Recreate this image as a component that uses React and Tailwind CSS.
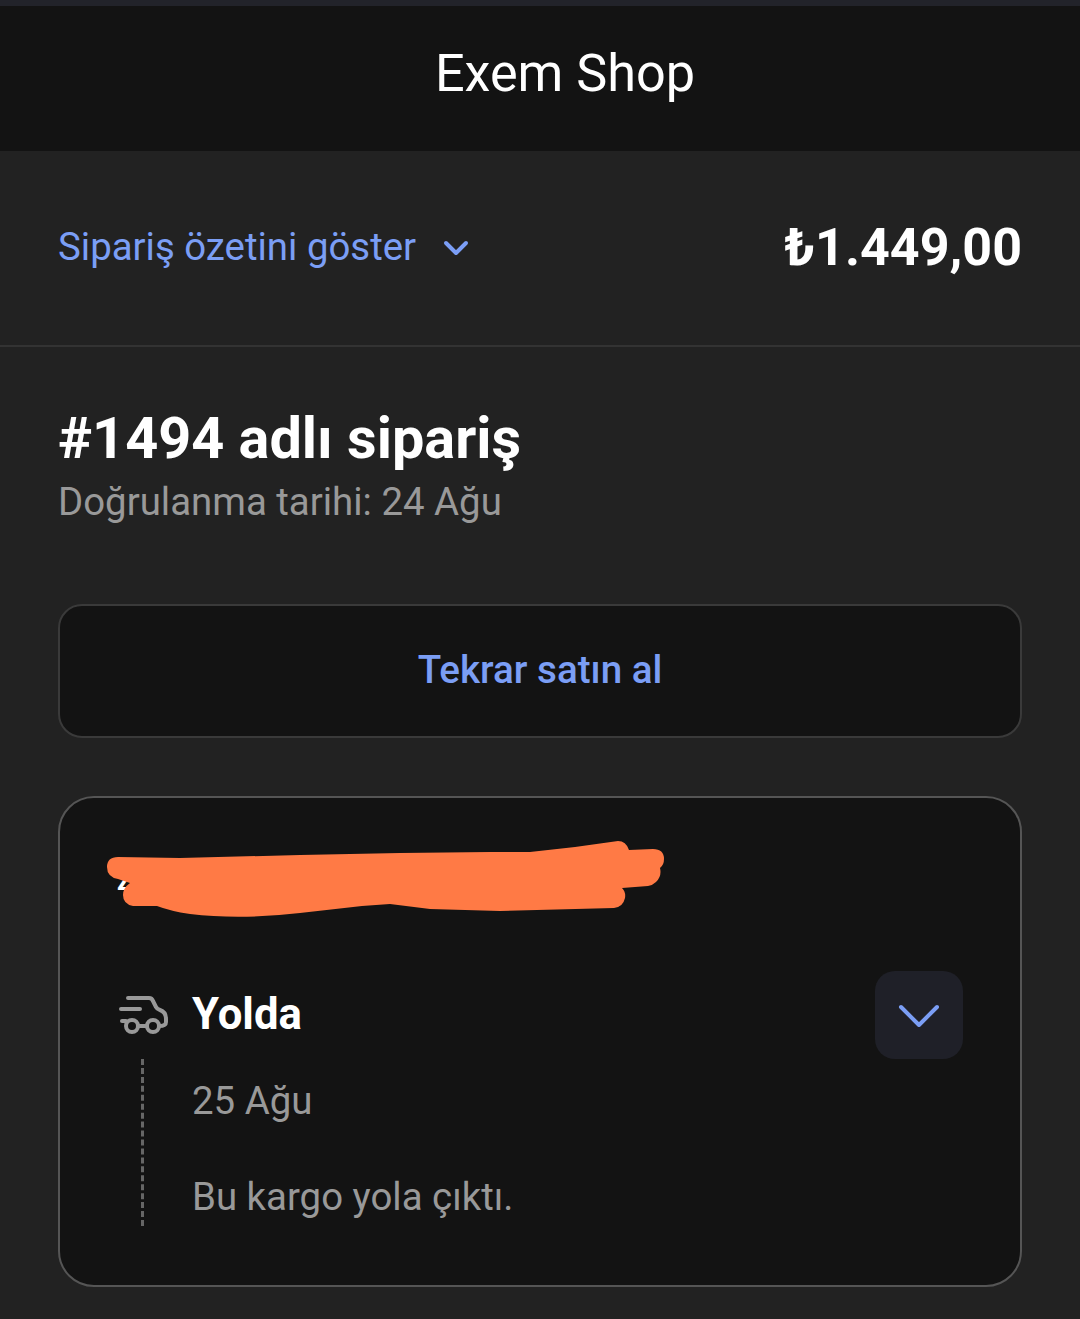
import React from 'react';

const TruckIcon = () => (
  <svg className="w-[50px] h-[42px] shrink-0" viewBox="118 995 50 42" fill="none" stroke="#999999" strokeWidth="4" strokeLinecap="round" strokeLinejoin="round">
    <path d="M127 999 H148 Q151 999 152 1002 L155 1008 Q156 1010 159 1011 Q165 1013 165 1020 V1023 Q165 1027 158 1027" />
    <path d="M120 1010 H139" />
    <path d="M121 1022 H125" />
    <path d="M137 1027 H146" />
    <circle cx="131" cy="1027" r="6" />
    <circle cx="152" cy="1027" r="6" />
  </svg>
);

const Scribble = () => (
  <svg className="absolute left-[45px] top-[41px] w-[560px] h-[80px]" viewBox="105 840 560 80" fill="#ff7a45">
    <path d="M107 868 Q107 858 118 858 L180 859 L300 856 L400 854 L490 853 L530 853 L575 848 L618 842 Q626 842 629 851 L653 850 Q664 850 664 860 Q664 866 660 869 Q662 877 656 883 Q653 886 648 887 L622 889 Q626 893 625 899 Q623 908 614 909 L500 912 L430 910 L390 905 L362 907 L300 914 Q240 921 190 915 Q170 912 157 907 L133 907 Q123 905 123 896 Q123 889 130 884 L118 880 Q107 878 107 868 Z" />
  </svg>
);

const App = () => {
  return (
    <div className="min-h-[1319px] overflow-hidden bg-[#222222] font-['Roboto',sans-serif]">
      <div className="h-[6px] bg-[#22232a]" />
      <header className="h-[145px] bg-[#131313] flex items-center justify-center pl-[50px] pb-[8px]">
        <h1 className="text-[52.2px] leading-none text-white">Exem Shop</h1>
      </header>

      <div className="h-[196px] border-b-2 border-[#333333] pl-[58px] pr-[58px] flex items-center justify-between">
        <div className="flex items-center gap-[27px] text-[#7b9ef5]">
          <span className="text-[38.4px] -translate-y-px">Sipariş özetini göster</span>
          <svg className="w-[26px] h-[16px]" viewBox="0 0 26 16" fill="none" stroke="currentColor" strokeWidth="4" strokeLinecap="round" strokeLinejoin="round">
            <path d="M3 3 L13 13 L23 3" />
          </svg>
        </div>
        <span className="text-[52px] font-bold text-white leading-none">₺1.449,00</span>
      </div>

      <div className="px-[58px]">
        <h2 className="mt-[57px] text-[57.6px] leading-[70px] font-bold text-white">#1494 adlı sipariş</h2>
        <p className="mt-[3px] text-[38.4px] leading-[50px] text-[#999999]">Doğrulanma tarihi: 24 Ağu</p>

        <button className="mt-[77px] w-full h-[134px] pb-[2px] rounded-[24px] bg-[#131313] border-2 border-[#3a3a3a] text-[38.6px] font-medium text-[#7b9ef5]">
          Tekrar satın al
        </button>

        <div className="relative mt-[58px] h-[491px] rounded-[36px] bg-[#131313] border-2 border-[#555555] pt-[173px] pl-[59px] pr-[57px]">
          <span className="absolute left-[57px] top-[70px] text-[26px] font-bold leading-none text-white">Z</span>
          <Scribble />

          <div className="flex items-center h-[88px]">
            <TruckIcon />
            <span className="ml-[23px] text-[43.7px] font-bold text-white leading-none">Yolda</span>
            <button className="ml-auto w-[88px] h-[88px] rounded-[20px] bg-[#1f2028] flex items-center justify-center">
              <svg className="w-[42px] h-[24px]" viewBox="0 0 42 24" fill="none" stroke="#7b9ef5" strokeWidth="4" strokeLinecap="round" strokeLinejoin="round">
                <path d="M3 4 L21 22 L39 4" />
              </svg>
            </button>
          </div>

          <div className="flex">
            <div className="ml-[22px] h-[167px] border-l-[3px] border-dashed border-[#666666]" />
            <div className="ml-[48px] text-[38.4px] text-[#999999]">
              <p className="mt-[18px] leading-[48px]">25 Ağu</p>
              <p className="mt-[48px] leading-[48px]">Bu kargo yola çıktı.</p>
            </div>
          </div>
        </div>
      </div>
    </div>
  );
};

export default App;
